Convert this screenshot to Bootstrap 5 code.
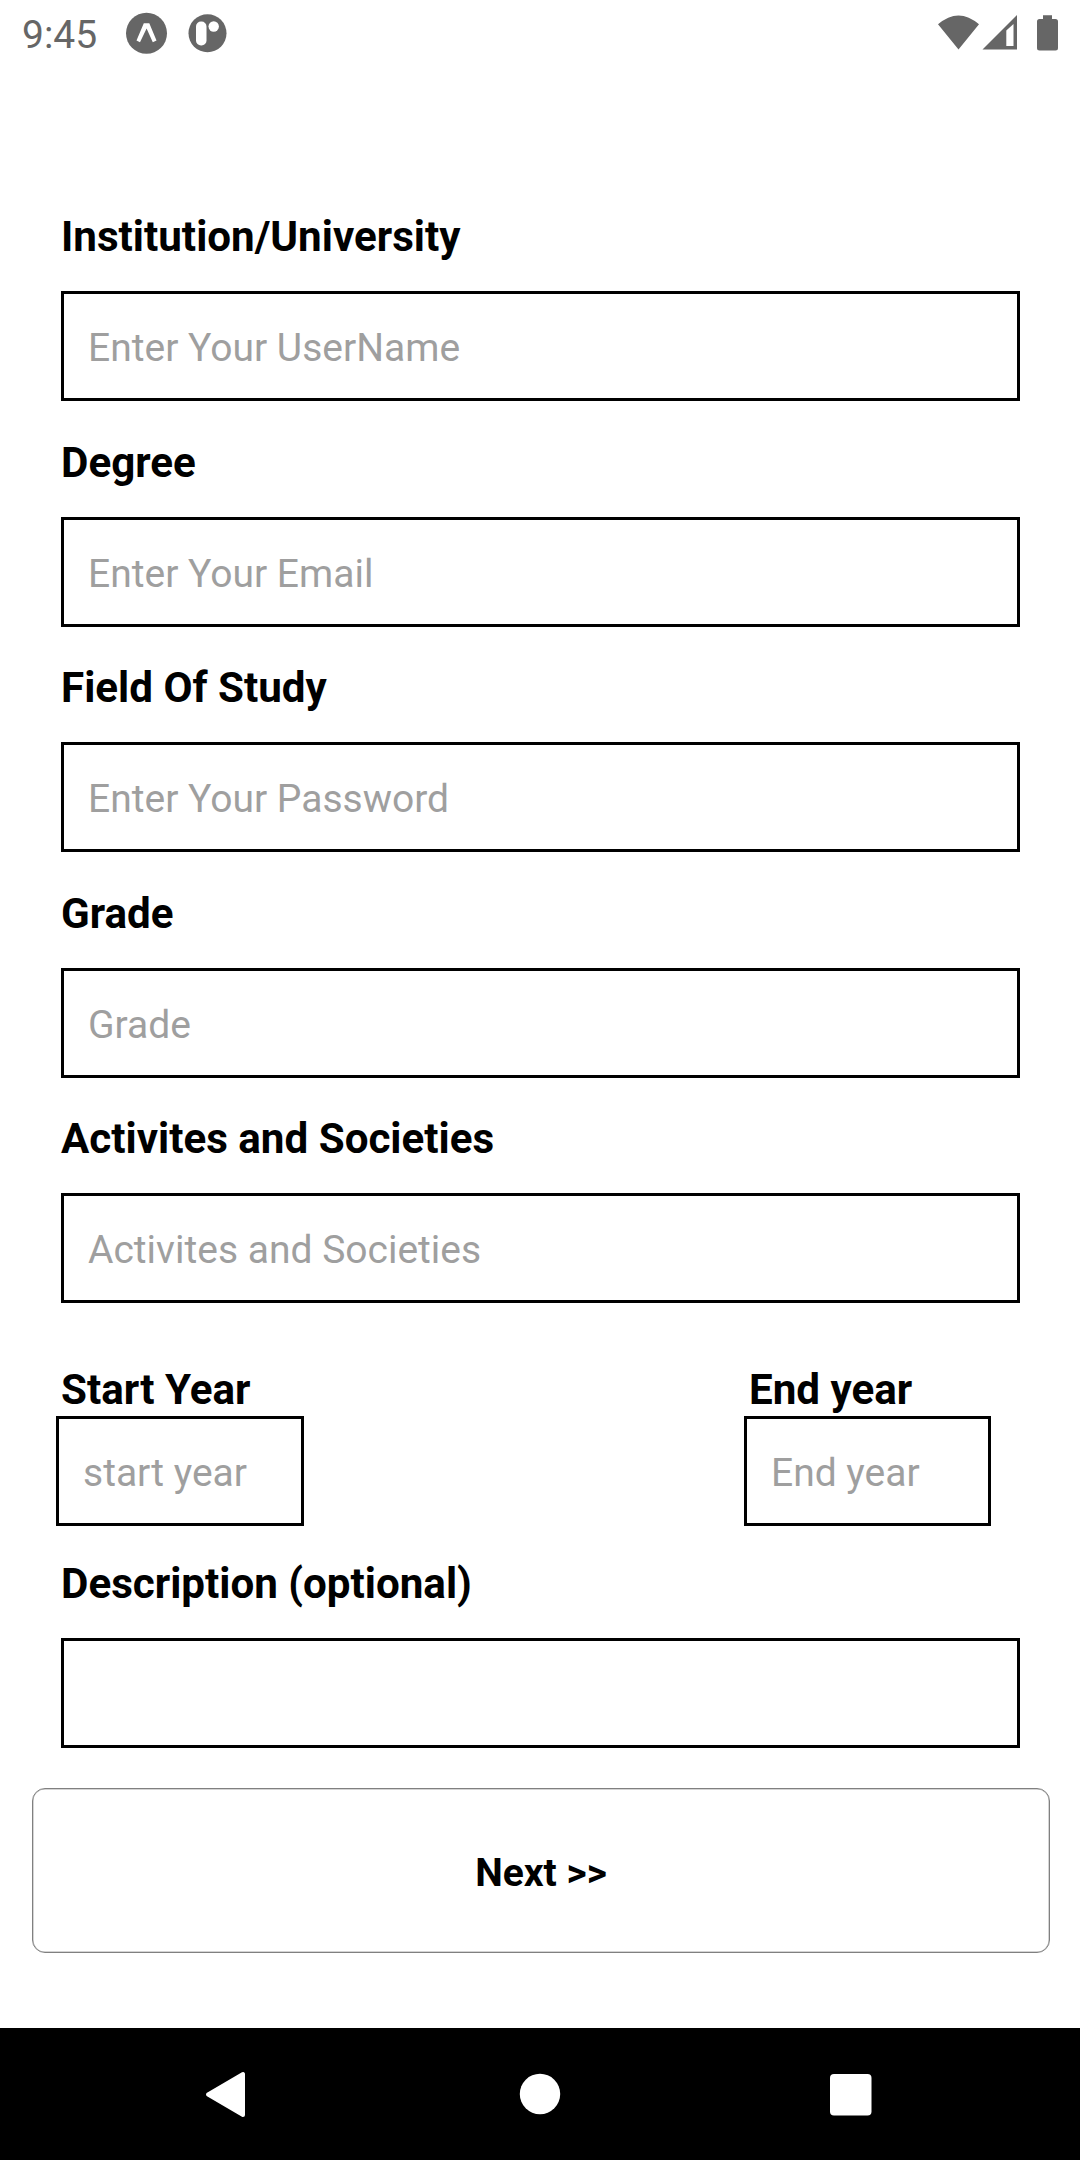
<!DOCTYPE html>
<html lang="en"><head><meta charset="utf-8"><title>Education</title>
<meta name="viewport" content="width=device-width, initial-scale=1">
<link href="https://cdn.jsdelivr.net/npm/bootstrap@5.3.0/dist/css/bootstrap.min.css" rel="stylesheet">
<style>
body{font-family:Roboto,sans-serif;width:1080px;height:2160px;color:#000;background:#fff;overflow:hidden}
.status{height:66px;padding:0 22px;color:#666}
.clock{font-size:39px;line-height:66px;width:104px;padding-top:3px}
.form-area{height:1962px;padding:142px 60px 0 61px}
.lbl{font-size:42.15px;font-weight:700;line-height:56px;height:56px;margin-bottom:27px;padding-top:1px;white-space:nowrap}
.box.form-control{height:110px;border:3px solid #000;border-radius:0;padding:4px 24px 0;font-size:39px;background:#fff;color:#000}
.box::placeholder{color:#9f9f9f;opacity:1}
.grp{height:225.5px;flex:none}
.years{height:219.5px;flex:none;padding-top:25.5px;margin:0 29px 0 -5px}
.year{width:248px}
.year-end{width:247px}
.years .lbl{margin:0 0 -1px 5px}
.next.btn{flex:none;height:165px;margin:7.5px -30px 0 -29px;padding:5px 0 0;border:1px solid #808080;border-radius:13px;font-size:39px;font-weight:700;color:#000;box-shadow:inset 0 0 0 .5px #aaa}
.navi{height:132px;background:#000}
svg{display:block;flex:none}
</style></head><body>
<header class="status d-flex align-items-center">
<span class="clock">9:45</span>
<svg width="104" height="66" viewBox="126 0 104 66"><circle cx="146.5" cy="33.3" r="20.5" fill="#666"/><path d="M136.500 40.500 143.800 23.300H149.300L156.500 40.500 152.800 42.200 146.600 28.500 140 42.200Z" fill="#fff"/><circle cx="207.500" cy="33.200" r="19" fill="#666"/><rect x="196" y="21.500" width="10.500" height="24" rx="5" fill="#fff"/><circle cx="213.700" cy="26.500" r="5.200" fill="#fff"/></svg>
<svg class="ms-auto" width="122" height="66" viewBox="936 0 122 66" fill="#666"><path d="M938 24.300Q958.500 6.500 979 24.300L958.500 49.500ZM982.500 49.500 1017 15v34.500Z"/><path d="M1006.300 30.500 1013.500 24v22h-7.200Z" fill="#fff"/><path d="M1043 15.300h9V19h3.500q2.500 0 2.500 2.500V48q0 2.500-2.500 2.500h-16q-2.500 0-2.500-2.500V21.500q0-2.500 2.500-2.500h3.500Z"/></svg>
</header>
<main class="form-area d-flex flex-column">
<div class="grp"><label class="lbl d-block" for="inst">Institution/University</label><input id="inst" class="box form-control" placeholder="Enter Your UserName"></div>
<div class="grp"><label class="lbl d-block" for="deg">Degree</label><input id="deg" class="box form-control" placeholder="Enter Your Email"></div>
<div class="grp"><label class="lbl d-block" for="field">Field Of Study</label><input id="field" class="box form-control" placeholder="Enter Your Password"></div>
<div class="grp"><label class="lbl d-block" for="grade">Grade</label><input id="grade" class="box form-control" placeholder="Grade"></div>
<div class="grp"><label class="lbl d-block" for="act">Activites and Societies</label><input id="act" class="box form-control" placeholder="Activites and Societies"></div>
<div class="years d-flex justify-content-between">
<div class="year"><label class="lbl d-block" for="from">Start Year</label><input id="from" class="box form-control" placeholder="start year"></div>
<div class="year-end"><label class="lbl d-block" for="to">End year</label><input id="to" class="box form-control" placeholder="End year"></div>
</div>
<div class="grp"><label class="lbl d-block" for="desc">Description (optional)</label><input id="desc" class="box form-control"></div>
<button class="next btn" type="button">Next &gt;&gt;</button>
</main>
<nav class="navi"><svg width="1080" height="132" viewBox="0 2028 1080 132" fill="#fff"><path d="M208 2094.500 243 2074V2115Z" stroke="#fff" stroke-width="4" stroke-linejoin="round"/><circle cx="540" cy="2094" r="20.200"/><rect x="830" y="2074" width="41.500" height="41.500" rx="4"/></svg></nav>
<script src="https://cdn.jsdelivr.net/npm/bootstrap@5.3.0/dist/js/bootstrap.bundle.min.js"></script>
</body></html>
